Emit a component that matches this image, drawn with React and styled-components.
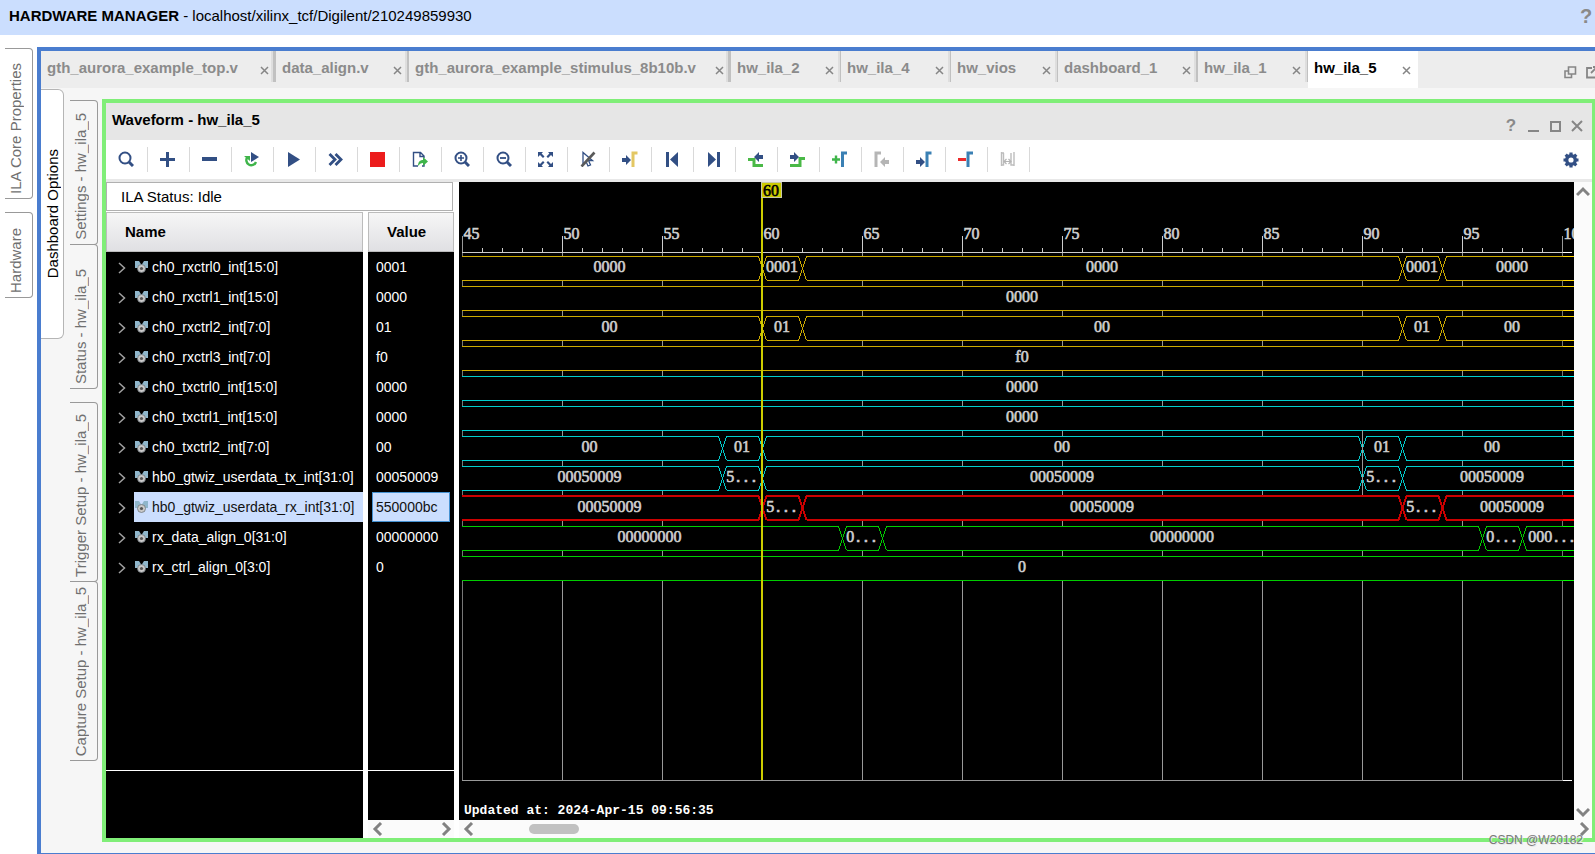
import React from "react";
import styled, { createGlobalStyle } from "styled-components";

const GlobalStyle = createGlobalStyle`
  *, *::before, *::after { box-sizing: border-box; }
  html, body { margin: 0; background: #ffffff; overflow: hidden; }
  body { font: 15px/18px "Liberation Sans", Arial, sans-serif; color: #000000; }
  button { margin: 0; padding: 0; border: 0; background: none; font: inherit; color: inherit; cursor: pointer; }
  h1, h2 { margin: 0; font-size: 15px; line-height: 18px; }
  svg { display: block; flex: none; }
`;

const NAVY = "#324f84";
const GREEN = "#3fb54a";
const BLUE = "#3a80b4";

/* ---------- Shell ---------- */

const Page = styled.div`
  display: flex;
  flex-direction: column;
  min-height: 100vh;
`;

const ManagerBar = styled.header`
  display: flex;
  align-items: center;
  justify-content: space-between;
  height: 35px;
  padding: 0 3px 3px 9px;
  background: #cbdefe;
`;

const ManagerTitle = styled.h1`
  font-weight: 400;
`;

const HelpButton = styled.button`
  width: 12px;
  color: #8a8a8a;
  font-size: ${(p) => (p.$large ? "20px" : "17px")};
  font-weight: 700;
  text-align: center;
`;

const Workspace = styled.div`
  display: flex;
  flex: 1;
  padding-top: 12px;
`;

const OuterRail = styled.nav`
  display: flex;
  flex-direction: column;
  gap: 13px;
  width: 37px;
  padding: 1px 0 0 5px;
`;

const SideTab = styled.button`
  display: flex;
  align-items: center;
  justify-content: flex-end;
  width: 28px;
  height: ${(p) => p.$height}px;
  padding: 6px 6px 4px 0;
  flex-direction: column;
  border: 1px solid #999999;
  border-left: 0;
  border-radius: 0 4px 4px 0;
  margin-top: ${(p) => (p.$joined ? "-1px" : "0")};
  color: #707070;
`;

const Upright = styled.span`
  writing-mode: vertical-rl;
  transform: rotate(180deg);
  white-space: nowrap;
`;

const Dashboard = styled.section`
  display: flex;
  flex-direction: column;
  flex: 1;
  min-width: 0;
  border: solid #4a7dcf;
  border-width: 4px 0 1px 4px;
  background: #f6f6f6;
`;

const TabStrip = styled.div`
  display: flex;
  height: 37px;
  background: #ededed;
  overflow: hidden;
`;

const FileTab = styled.div`
  display: flex;
  justify-content: space-between;
  flex: none;
  width: ${(p) => p.$width}px;
  height: ${(p) => (p.$active ? "37px" : "31px")};
  padding: 8px ${(p) => 7 - p.$divider}px 0 6px;
  color: ${(p) => (p.$active ? "#000000" : "#8b8b8b")};
  background: ${(p) => (p.$active ? "#ffffff" : "transparent")};
  border-right: ${(p) => p.$divider}px solid #c1c1c1;
  box-shadow: ${(p) => (p.$active ? "none" : "inset -2px 0 0 #dedede")};
`;

const TabLabel = styled.button`
  height: 18px;
  font-weight: 700;
  white-space: nowrap;
`;

const TabClose = styled.button`
  display: flex;
  align-items: center;
  height: 22px;
`;

const StripTools = styled.div`
  display: flex;
  gap: 8px;
  margin: 15px -3px 0 auto;
  align-items: flex-start;
`;

const DashboardBody = styled.div`
  display: flex;
  align-items: flex-start;
  flex: 1;
`;

const OptionsTab = styled.button`
  display: flex;
  align-items: center;
  justify-content: center;
  width: 23px;
  height: 250px;
  margin-top: 1px;
  padding-left: 2px;
  border: 1px solid #b5b5b5;
  border-left: 0;
  border-radius: 0 6px 6px 0;
  background: #ffffff;
`;

const InnerRail = styled.nav`
  display: flex;
  flex-direction: column;
  width: 38px;
  padding: 12px 0 0 6px;
`;

const RailGap = styled.div`
  height: 13px;
`;

/* ---------- Waveform window ---------- */

const WaveWindow = styled.section`
  flex: 1;
  min-width: 0;
  margin: 11px 0;
  border: 4px solid #80ee78;
  border-right-width: 3px;
  background: #ffffff;
`;

const TitleBar = styled.header`
  display: flex;
  justify-content: space-between;
  height: 37px;
  padding: 8px 9px 0 6px;
  background: #e6e6e6;
`;

const WindowTools = styled.div`
  display: flex;
  align-items: center;
  gap: 10px;
  height: 30px;
`;

const ToolBar = styled.div`
  display: flex;
  align-items: center;
  height: 42px;
  padding-right: 13px;
  border-bottom: 3px solid #e8e8e8;
`;

const Tool = styled.button`
  display: flex;
  align-items: center;
  justify-content: center;
  flex: none;
  width: 42px;
  height: 25px;
  padding: 0 1px 1px 0;
  border-right: 1px solid #d9d9d9;
`;

const SettingsTool = styled.button`
  margin-left: auto;
`;

const Panes = styled.div`
  display: flex;
  gap: 5px;
`;

const SignalPane = styled.div`
  width: 348px;
  display: flex;
  flex-direction: column;
`;

const Status = styled.output`
  display: block;
  width: 347px;
  height: 29px;
  margin-bottom: 1px;
  padding: 5px 14px;
  border: 1px solid #b0b0b0;
`;

const Columns = styled.div`
  display: flex;
  flex: 1;
  gap: 5px;
`;

const Column = styled.div`
  display: flex;
  flex-direction: column;
  width: ${(p) => p.$width}px;
  background: #000000;
`;

const SignalTable = styled.table`
  width: 100%;
  table-layout: fixed;
  border-collapse: separate;
  border-spacing: 0;
  color: #ffffff;

  th {
    height: 40px;
    padding: 0 18px;
    border: 1px solid #bcbcbc;
    background: linear-gradient(#f6f6f6, #e0e0e3);
    color: #000000;
    text-align: left;
  }
  td { height: 30px; padding: 0; font-size: 14px; }
`;

const NameRow = styled.div`
  display: flex;
  height: 30px;
`;

const Expander = styled.button`
  width: 28px;
  padding: 2px 0 0 12px;
  flex: none;
`;

const SignalName = styled.div`
  display: flex;
  align-items: center;
  flex: 1;
  gap: 4px;
  min-width: 0;
  padding: 0 0 1px 1px;
  overflow: hidden;
  white-space: nowrap;
  background: ${(p) => (p.$selected ? "#cbdefe" : "transparent")};
  color: ${(p) => (p.$selected ? "#111111" : "#ffffff")};
`;

const SignalValue = styled.div`
  height: 30px;
  margin: 0 4px;
  padding: 5px 3px;
  border: 1px solid ${(p) => (p.$selected ? "#4592d2" : "transparent")};
  background: ${(p) => (p.$selected ? "#cbdefe" : "transparent")};
  color: ${(p) => (p.$selected ? "#111111" : "#ffffff")};
`;

const Footer = styled.div`
  flex: 1;
  margin-top: 188px;
  border-top: 1px solid #ffffff;
`;

const HScroll = styled.div`
  display: flex;
  align-items: center;
  justify-content: space-between;
  height: 18px;
  padding: 0 1px 0 3px;
  background: #fbfbfb;
`;

const Thumb = styled.div`
  width: 50px;
  height: 10px;
  margin: 0 auto 0 53px;
  border-radius: 5px;
  background: #c1c1c1;
`;

const WavePane = styled.div`
  flex: 1;
  min-width: 0;
`;

const WaveRow = styled.div`
  display: flex;
  height: 638px;
`;

const Canvas = styled.svg`
  flex: 1;
  min-width: 0;
  height: 638px;
  background: #000000;
  overflow: hidden;

  text { font: 16px "Liberation Serif", "Times New Roman", serif; fill: #d0d0d0; stroke: #d0d0d0; stroke-width: 0.6; }
  .dots { font: 700 13px "Liberation Mono", "Courier New", monospace; }
  .stamp { font: 700 13px "Liberation Mono", "Courier New", monospace; fill: #ffffff; stroke: none; }
  .flag { fill: #000000; stroke: #000000; }
  path, line, rect { shape-rendering: crispEdges; }
`;

const VScroll = styled.div`
  display: flex;
  flex-direction: column;
  align-items: center;
  justify-content: space-between;
  width: 18px;
  padding: 3px 0 1px;
  background: #fbfbfb;
`;

const Watermark = styled.div`
  position: absolute;
  right: 12px;
  bottom: 5px;
  color: #7a7a7a;
  font-size: 12px;
  text-shadow: 1px 1px 0 #e8e8e8;
`;

/* ---------- Icons ---------- */

const Svg = ({ size = 16, children }) => (
  <svg width={size} height={size} viewBox={`0 0 ${size} ${size}`} fill="none" aria-hidden="true">
    {children}
  </svg>
);

const Cross = ({ size, width }) => (
  <Svg size={size}>
    <path d={`M1 1L${size - 1} ${size - 1}M${size - 1} 1L1 ${size - 1}`} stroke="#868686" strokeWidth={width} />
  </Svg>
);

const Chevron = ({ dir, color = "#828282", width = 3 }) => {
  const d = {
    left: "M10 1L4 7L10 13",
    right: "M4 1L10 7L4 13",
    up: "M1 10L7 4L13 10",
    down: "M1 4L7 10L13 4",
  }[dir];
  return <Svg size={14}><path d={d} stroke={color} strokeWidth={width} /></Svg>;
};

const Lens = ({ children }) => (
  <Svg>
    <circle cx="7" cy="7" r="5.5" stroke={NAVY} strokeWidth="2" />
    <path d="M11 11L15 15" stroke={NAVY} strokeWidth="3" />
    {children}
  </Svg>
);

const arrowRight = (x, y) => `M${x} ${y - 2}h4v-3l5 5l-5 5v-3h-4z`;
const arrowLeft = (x, y) => `M${x} ${y - 2}h-4v-3l-5 5l5 5v-3h4z`;

const tools = [
  ["Find", <Lens />],
  ["Add", <Svg><path d="M7.5 1V16M0 8.5H15" stroke={NAVY} strokeWidth="3" /></Svg>],
  ["Remove", <Svg><path d="M0 8H15" stroke={NAVY} strokeWidth="4" /></Svg>],
  ["Re-trigger", <Svg>
    <path d="M3.5 6A5 5 0 1 0 12 11" stroke={GREEN} strokeWidth="2.4" />
    <path d="M0 5H6V10Z" fill={GREEN} />
    <path d="M7 1L15 6L7 11Z" fill={NAVY} />
  </Svg>],
  ["Run trigger", <Svg><path d="M2 1L14 8.5L2 16Z" fill={NAVY} /></Svg>],
  ["Run trigger immediate", <Svg><path d="M1.5 3L7 8.5L1.5 14M7.5 3L13 8.5L7.5 14" stroke={NAVY} strokeWidth="2.8" /></Svg>],
  ["Stop trigger", <Svg><rect y="1" width="15" height="15" fill="#ec1c1c" /></Svg>],
  ["Export", <Svg>
    <path d="M12 7V5L8.5 1.5H1.5V15H6M12 13V15H10M8 1.5V5.5H12" stroke={NAVY} strokeWidth="1.4" />
    <path d="M6 15C6 11 8 9 11 9V6L16 10.5L11 15V12C9 12 7.500 13 6 15Z" fill={GREEN} />
  </Svg>],
  ["Zoom in", <Lens><path d="M4 7H10M7 4V10" stroke={NAVY} strokeWidth="1.6" /></Lens>],
  ["Zoom out", <Lens><path d="M4 7H10" stroke={NAVY} strokeWidth="1.8" /></Lens>],
  ["Zoom fit", <Svg>
    <path d="M0 1H5L3.6 2.6L6.5 5.5L5 7L2 4L0 6ZM15 1H10L11.4 2.6L8.5 5.5L10 7L13 4L15 6ZM0 16H5L3.6 14.4L6.5 11.5L5 10L2 13L0 11ZM15 16H10L11.4 14.4L8.5 11.5L10 10L13 13L15 11Z" fill={NAVY} />
  </Svg>],
  ["Cursor lock", <Svg>
    <path d="M3 1.5V13L6 10.5L8 15L10.5 14L8.5 9.5H12.500Z" stroke={NAVY} strokeWidth="1.3" />
    <path d="M14.500 1.5L1.5 15.5" stroke="#5a5a5a" strokeWidth="2.6" />
  </Svg>],
  ["Go to cursor", <Svg>
    <path d={arrowRight(0, 9)} fill={NAVY} />
    <path d="M11 16V2H15.5" stroke="#e3c763" strokeWidth="3" />
  </Svg>],
  ["Go to start", <Svg><path d="M2 1H5V16H2ZM14 1V16L6 8.5Z" fill={NAVY} /></Svg>],
  ["Go to end", <Svg><path d="M11 1H14V16H11ZM2 1V16L10 8.5Z" fill={NAVY} /></Svg>],
  ["Previous transition", <Svg>
    <path d="M0 8.5H6V14.5H15" stroke="#4ab947" strokeWidth="3" />
    <path d={arrowLeft(15, 6)} fill={NAVY} />
  </Svg>],
  ["Next transition", <Svg>
    <path d="M0 14.5H10V7.5H15" stroke="#4ab947" strokeWidth="3" />
    <path d={arrowRight(0, 6)} fill={NAVY} />
  </Svg>],
  ["Add marker", <Svg>
    <path d="M0 8.5H8M4 4.5V12.5" stroke={GREEN} strokeWidth="2.4" />
    <path d="M10.5 16V2H15" stroke={BLUE} strokeWidth="3" />
  </Svg>],
  ["Previous marker", <Svg>
    <path d="M2 16V2H7" stroke="#b5b5b5" strokeWidth="3" />
    <path d={arrowLeft(15, 11)} fill="#b5b5b5" />
  </Svg>],
  ["Next marker", <Svg>
    <path d={arrowRight(0, 11)} fill={NAVY} />
    <path d="M11 16V2H15.5" stroke={BLUE} strokeWidth="3" />
  </Svg>],
  ["Delete marker", <Svg>
    <path d="M0 8.5H8" stroke="#ec2a2a" strokeWidth="3" />
    <path d="M10 16V2H15" stroke={BLUE} strokeWidth="3" />
  </Svg>],
  ["Swap cursors", <Svg>
    <path d="M1.5 1V15M1 2H4M3.500 2V14H1M14 1V15M11 2V14H14" stroke="#bdbdbd" strokeWidth="1.4" />
    <path d="M4 10.5H11M6.5 8L4 10.5L6.500 13M8.500 8L11 10.5L8.500 13" stroke="#b5b5b5" strokeWidth="1.2" />
  </Svg>],
];

const Gear = () => (
  <Svg>
    <circle cx="8" cy="8" r="4.3" stroke={NAVY} strokeWidth="3.4" />
    {[0, 45, 90, 135].map((a) => (
      <path key={a} d="M8 0.5V3M8 13V15.5" stroke={NAVY} strokeWidth="3.2" transform={`rotate(${a} 8 8)`} />
    ))}
  </Svg>
);

const SignalIcon = () => (
  <svg width="13" height="13" viewBox="0 0 13 13" aria-hidden="true">
    <path d="M0 1H4L6.5 5L9 1H13V8H0Z" fill="#8fb6cb" />
    <circle cx="6.5" cy="8.5" r="4" fill="#c9c9c9" stroke="#6f777c" strokeWidth="0.8" />
    <circle cx="6.5" cy="8.5" r="1.6" fill="#555555" />
  </svg>
);

/* ---------- Data ---------- */

const fileTabs = [
  { label: "gth_aurora_example_top.v", width: 235, divider: 3 },
  { label: "data_align.v", width: 133, divider: 2 },
  { label: "gth_aurora_example_stimulus_8b10b.v", width: 322, divider: 3 },
  { label: "hw_ila_2", width: 110, divider: 1 },
  { label: "hw_ila_4", width: 110, divider: 1 },
  { label: "hw_vios", width: 107, divider: 1 },
  { label: "dashboard_1", width: 140, divider: 2 },
  { label: "hw_ila_1", width: 110, divider: 1 },
  { label: "hw_ila_5", width: 110, divider: 0, active: true },
];

const gold = ["#ccaa00", "#ffd500"];
const cyan = ["#00cccc", "#00ffff"];
const red = ["#cc0000", "#ff0000"];
const lime = ["#00cc00", "#00ff00"];

const rxEdges = [60, 62, 92, 94];
const txEdges = [58, 60, 90, 92];

const signals = [
  { name: "ch0_rxctrl0_int[15:0]", value: "0001", color: gold, edges: rxEdges, data: ["0000", "0001", "0000", "0001", "0000"] },
  { name: "ch0_rxctrl1_int[15:0]", value: "0000", color: gold, edges: [], data: ["0000"] },
  { name: "ch0_rxctrl2_int[7:0]", value: "01", color: gold, edges: rxEdges, data: ["00", "01", "00", "01", "00"] },
  { name: "ch0_rxctrl3_int[7:0]", value: "f0", color: gold, edges: [], data: ["f0"] },
  { name: "ch0_txctrl0_int[15:0]", value: "0000", color: cyan, edges: [], data: ["0000"] },
  { name: "ch0_txctrl1_int[15:0]", value: "0000", color: cyan, edges: [], data: ["0000"] },
  { name: "ch0_txctrl2_int[7:0]", value: "00", color: cyan, edges: txEdges, data: ["00", "01", "00", "01", "00"] },
  { name: "hb0_gtwiz_userdata_tx_int[31:0]", value: "00050009", color: cyan, edges: txEdges, data: ["00050009", "5...", "00050009", "5...", "00050009"] },
  { name: "hb0_gtwiz_userdata_rx_int[31:0]", value: "550000bc", color: red, selected: true, edges: rxEdges, data: ["00050009", "5...", "00050009", "5...", "00050009"] },
  { name: "rx_data_align_0[31:0]", value: "00000000", color: lime, edges: [64, 66, 96, 98], data: ["00000000", "0...", "00000000", "0...", "000..."] },
  { name: "rx_ctrl_align_0[3:0]", value: "0", color: lime, edges: [], data: ["0"] },
];

/* ---------- Waveform drawing ---------- */

const X0 = 3;
const VIEW_END = 1123;
const BRIGHT_FROM = 1104;
const GRID_BOTTOM = 598;
const xOf = (sample) => X0 + (sample - 45) * 20;

const Readout = ({ x, y, text }) => {
  const digits = text.replace(/\./g, "");
  const dots = text.slice(digits.length);
  return (
    <text x={x} y={y} textAnchor="middle">
      {digits}
      {dots && <tspan className="dots">{dots}</tspan>}
    </text>
  );
};

const Bus = ({ signal, index }) => {
  const half = signal.selected ? 0 : 0.5;
  const top = 74 + index * 30 + half;
  const bottom = top + 24;
  const mid = top + 12;
  const width = signal.selected ? 2 : 1;
  const [dim, bright] = signal.color;
  const bounds = [null, ...signal.edges.map(xOf), null];
  return (
    <g>
      {signal.data.map((text, i) => {
        const from = bounds[i];
        const to = bounds[i + 1];
        const left = from === null ? `M${X0} ${bottom}` : `M${from + 4.5} ${bottom}L${from + 0.5} ${mid}`;
        const rise = from === null ? `M${X0} ${top}` : `L${from + 4.5} ${top}`;
        const outline =
          to === null
            ? `${left}${rise}H${VIEW_END}M${from === null ? X0 : from + 4} ${bottom}H${VIEW_END}`
            : `${left}${rise}H${to - 3.5}L${to + 0.5} ${mid}L${to - 3.5} ${bottom}H${from === null ? X0 : from + 4.5}`;
        const fillFrom = from === null ? X0 : from + 3;
        const fillTo = to === null ? VIEW_END : to - 2;
        const whole = from === null && to === null;
        const centre = ((from ?? (whole ? X0 : X0 - 5)) + (to ?? VIEW_END)) / 2;
        return (
          <g key={i}>
            <rect x={fillFrom} y={top} width={fillTo - fillFrom} height={24} fill="#000000" />
            <path d={outline} fill="none" stroke={dim} strokeWidth={width} />
            <Readout x={centre} y={90 + index * 30} text={text} />
          </g>
        );
      })}
      <path d={`M${BRIGHT_FROM} ${top}H${VIEW_END}M${BRIGHT_FROM} ${bottom}H${VIEW_END}`} stroke={bright} strokeWidth={width} />
    </g>
  );
};

const majors = Array.from({ length: 12 }, (_, i) => 45 + i * 5);
const minors = Array.from({ length: 56 }, (_, i) => 45 + i).filter((s) => s % 5);

const Waveform = () => (
  <Canvas role="img" aria-label="Captured samples 45 to 100">
    {majors.map((s) => {
      const x = xOf(s) + 0.5;
      return (
        <g key={s}>
          <line x1={x} x2={x} y1="54" y2="71" stroke={s === 45 || s === 100 ? "#999999" : "#cccccc"} />
          <line x1={x} x2={x} y1="71" y2={GRID_BOTTOM} stroke={s === 45 || s === 100 ? "#777777" : "#999999"} />
          <text x={x + 1} y="57">{s}</text>
        </g>
      );
    })}
    {minors.map((s) => (
      <line key={s} x1={xOf(s) + 0.5} x2={xOf(s) + 0.5} y1="66" y2="71" stroke="#cccccc" />
    ))}
    <path d={`M${X0} 70.5H1112`} stroke="#cccccc" />
    <path d={`M${BRIGHT_FROM} 70.5H1113M${BRIGHT_FROM} 598.5H1113`} stroke="#ffffff" />
    <path d={`M${X0} 598.5H${BRIGHT_FROM}`} stroke="#999999" />
    {signals.map((signal, i) => <Bus key={signal.name} signal={signal} index={i} />)}
    <line x1={xOf(90) + 0.5} x2={xOf(90) + 0.5} y1="248" y2="313" stroke="#999999" />
    <line x1="303" x2="303" y1="16" y2={GRID_BOTTOM} stroke="#cccc00" strokeWidth="2" />
    <rect x="302.5" y="0.5" width="20" height="15" fill="#cccc00" stroke="#c8c8a8" />
    <text className="flag" x="304" y="14">60</text>
    <text className="stamp" x="5" y="632">Updated at: 2024-Apr-15 09:56:35</text>
  </Canvas>
);

/* ---------- App ---------- */

export default function App() {
  return (
    <Page>
      <GlobalStyle />
      <ManagerBar>
        <ManagerTitle><b>HARDWARE MANAGER</b> - localhost/xilinx_tcf/Digilent/210249859930</ManagerTitle>
        <HelpButton $large aria-label="Help">?</HelpButton>
      </ManagerBar>
      <Workspace>
        <OuterRail>
          <SideTab $height={151}><Upright>ILA Core Properties</Upright></SideTab>
          <SideTab $height={86}><Upright>Hardware</Upright></SideTab>
        </OuterRail>
        <Dashboard>
          <TabStrip>
            {fileTabs.map((tab) => (
              <FileTab key={tab.label} $width={tab.width} $divider={tab.divider} $active={tab.active}>
                <TabLabel>{tab.label}</TabLabel>
                <TabClose aria-label={`Close ${tab.label}`}><Cross size={9} width={1.5} /></TabClose>
              </FileTab>
            ))}
            <StripTools>
              <button aria-label="Float">
                <Svg size={13}><path d="M4.5 1H11.5V8H4.5ZM4 5H1V11.5H7.5V8" stroke="#868686" strokeWidth="1.6" /></Svg>
              </button>
              <button aria-label="Undock">
                <Svg size={13}><path d="M7 2H2V11.5H11V7M6 7L11 2M8 1H12V5" stroke="#868686" strokeWidth="1.8" /></Svg>
              </button>
            </StripTools>
          </TabStrip>
          <DashboardBody>
            <OptionsTab><Upright>Dashboard Options</Upright></OptionsTab>
            <InnerRail>
              <SideTab $height={145}><Upright>Settings - hw_ila_5</Upright></SideTab>
              <SideTab $height={145} $joined><Upright>Status - hw_ila_5</Upright></SideTab>
              <RailGap />
              <SideTab $height={180}><Upright>Trigger Setup - hw_ila_5</Upright></SideTab>
              <SideTab $height={180} $joined><Upright>Capture Setup - hw_ila_5</Upright></SideTab>
            </InnerRail>
            <WaveWindow>
              <TitleBar>
                <h2>Waveform - hw_ila_5</h2>
                <WindowTools>
                  <HelpButton aria-label="Help">?</HelpButton>
                  <button aria-label="Minimize"><Svg size={12}><path d="M1 11H12" stroke="#868686" strokeWidth="2" /></Svg></button>
                  <button aria-label="Maximize"><Svg size={12}><path d="M2 2H11V11H2Z" stroke="#868686" strokeWidth="2" /></Svg></button>
                  <button aria-label="Close"><Cross size={12} width={2} /></button>
                </WindowTools>
              </TitleBar>
              <ToolBar role="toolbar">
                {tools.map(([label, icon]) => <Tool key={label} aria-label={label}>{icon}</Tool>)}
                <SettingsTool aria-label="Settings"><Gear /></SettingsTool>
              </ToolBar>
              <Panes>
                <SignalPane>
                  <Status>ILA Status: Idle</Status>
                  <Columns>
                    <Column $width={257}>
                      <SignalTable>
                        <thead><tr><th scope="col">Name</th></tr></thead>
                        <tbody>
                          {signals.map((s) => (
                            <tr key={s.name}>
                              <td>
                                <NameRow>
                                  <Expander aria-label={`Expand ${s.name}`}>
                                    <svg width="8" height="12" viewBox="0 0 8 12" fill="none" aria-hidden="true">
                                      <path d="M1 1L6.5 6L1 11" stroke="#a0a0a0" strokeWidth="1.5" />
                                    </svg>
                                  </Expander>
                                  <SignalName $selected={s.selected}><SignalIcon />{s.name}</SignalName>
                                </NameRow>
                              </td>
                            </tr>
                          ))}
                        </tbody>
                      </SignalTable>
                      <Footer />
                    </Column>
                    <Column $width={86}>
                      <SignalTable>
                        <thead><tr><th scope="col">Value</th></tr></thead>
                        <tbody>
                          {signals.map((s) => (
                            <tr key={s.name}><td><SignalValue $selected={s.selected}>{s.value}</SignalValue></td></tr>
                          ))}
                        </tbody>
                      </SignalTable>
                      <Footer />
                      <HScroll>
                        <button aria-label="Scroll left"><Chevron dir="left" /></button>
                        <button aria-label="Scroll right"><Chevron dir="right" /></button>
                      </HScroll>
                    </Column>
                  </Columns>
                </SignalPane>
                <WavePane>
                  <WaveRow>
                    <Waveform />
                    <VScroll>
                      <button aria-label="Scroll up"><Chevron dir="up" /></button>
                      <button aria-label="Scroll down"><Chevron dir="down" /></button>
                    </VScroll>
                  </WaveRow>
                  <HScroll>
                    <button aria-label="Scroll left"><Chevron dir="left" /></button>
                    <Thumb />
                    <button aria-label="Scroll right"><Chevron dir="right" /></button>
                  </HScroll>
                </WavePane>
              </Panes>
            </WaveWindow>
          </DashboardBody>
        </Dashboard>
      </Workspace>
      <Watermark>CSDN @W20182</Watermark>
    </Page>
  );
}
